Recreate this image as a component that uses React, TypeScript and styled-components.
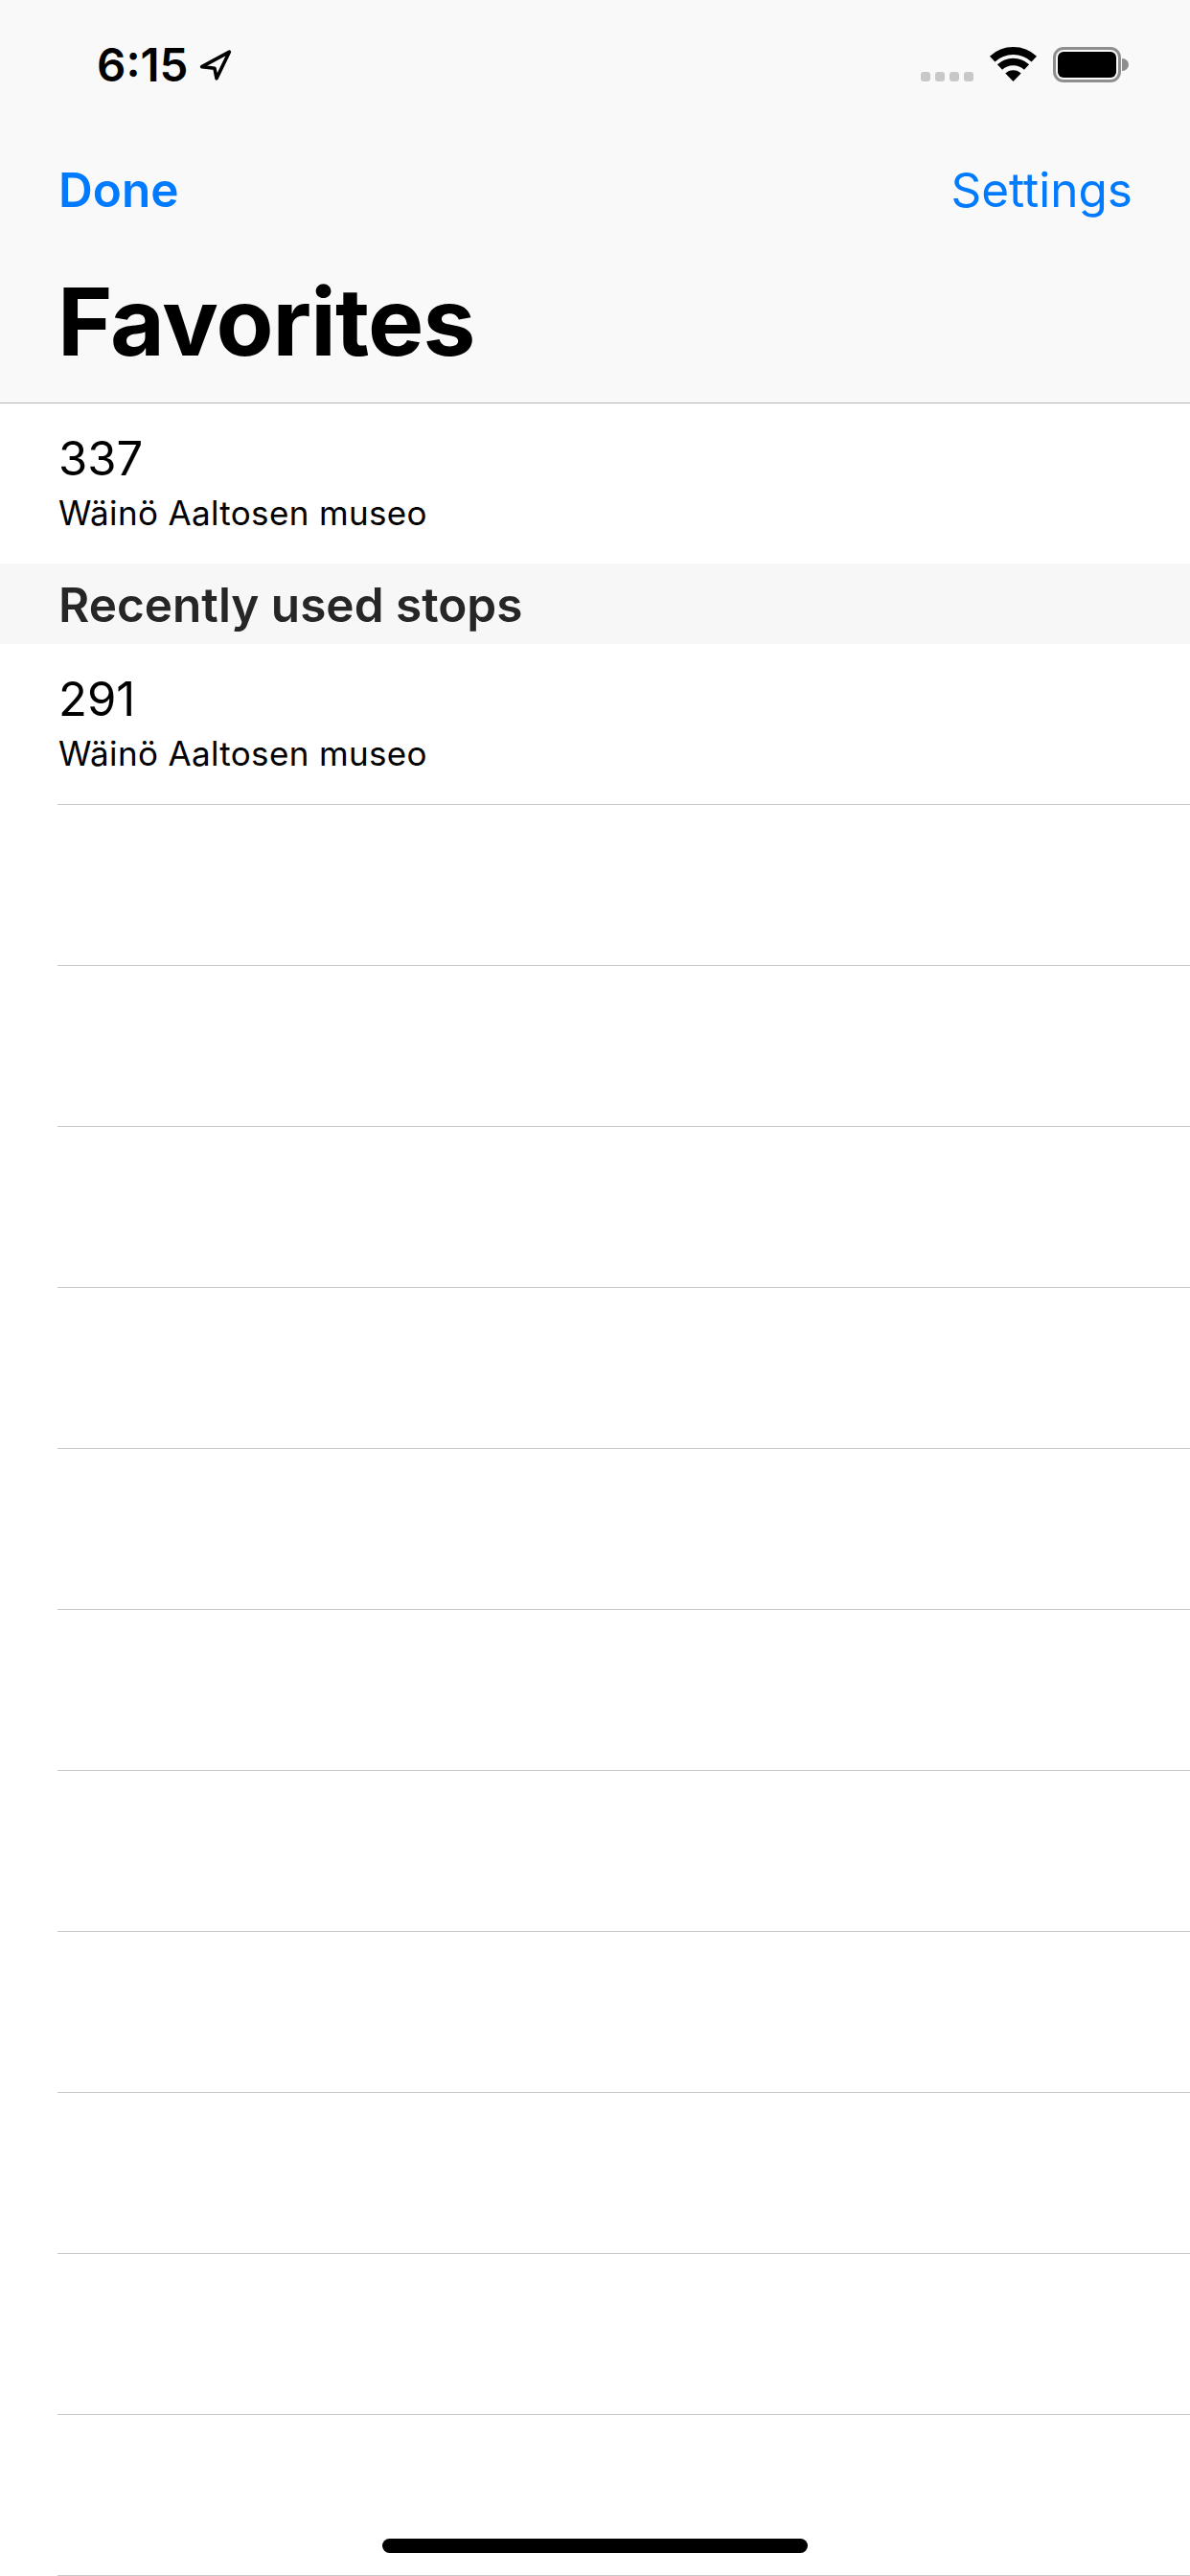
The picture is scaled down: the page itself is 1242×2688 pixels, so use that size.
import React from 'react';
import styled, { createGlobalStyle } from 'styled-components';

const GlobalStyle = createGlobalStyle`
  html, body {
    margin: 0;
    padding: 0;
    background: #fff;
  }
  body {
    font-family: Inter, "Noto Sans", "Liberation Sans", sans-serif;
    overflow: hidden;
  }
`;

const emptyRows = Array.from({ length: 11 }, (_, i) => i);

const App = () => {
  return (
    <Screen>
      <GlobalStyle />
      <Header>
        <StatusBar>
          <TimeGroup>
            <Time>6:15</Time>
            <svg width="34" height="32" viewBox="0 0 32 30" fill="none">
              <path
                d="M29.5 2 L2.5 16.5 L15 18 L17 28 Z"
                stroke="#000"
                strokeWidth="3.4"
                strokeLinejoin="round"
              />
            </svg>
          </TimeGroup>
          <StatusIcons>
            <SignalDots>
              <SignalDot />
              <SignalDot />
              <SignalDot />
              <SignalDot />
            </SignalDots>
            <svg width="49" height="36" viewBox="0 0 49 36" fill="none">
              <path d="M2.7 12.6 A32 32 0 0 1 46.3 12.6" stroke="#000" strokeWidth="8" />
              <path d="M10.5 21 A20.5 20.5 0 0 1 38.5 21" stroke="#000" strokeWidth="7.5" />
              <path d="M24.5 36 L16.3 27.6 A11.6 11.6 0 0 1 32.7 27.6 Z" fill="#000" />
            </svg>
            <Battery>
              <BatteryBody>
                <BatteryFill />
              </BatteryBody>
              <BatteryNub />
            </Battery>
          </StatusIcons>
        </StatusBar>
        <NavBar>
          <NavButton $bold>Done</NavButton>
          <NavButton>Settings</NavButton>
        </NavBar>
        <Title>Favorites</Title>
      </Header>

      <StopRow $plain>
        <StopBody $plain>
          <StopNumber>337</StopNumber>
          <StopName>Wäinö Aaltosen museo</StopName>
        </StopBody>
      </StopRow>

      <SectionHeader>Recently used stops</SectionHeader>

      <StopRow>
        <StopBody>
          <StopNumber>291</StopNumber>
          <StopName>Wäinö Aaltosen museo</StopName>
        </StopBody>
      </StopRow>

      {emptyRows.map((row) => (
        <StopRow key={row}>
          <StopBody />
        </StopRow>
      ))}

      <HomeIndicator />
    </Screen>
  );
};

export default App;

const Screen = styled.div`
  position: relative;
  width: 1242px;
  height: 2688px;
  overflow: hidden;
  background: #fff;
`;

const Header = styled.header`
  height: 420px;
  background: #f9f9f9;
  border-bottom: 1px solid #b3b3b3;
  box-sizing: content-box;
`;

const StatusBar = styled.div`
  height: 166px;
  display: flex;
  justify-content: space-between;
  align-items: flex-start;
  padding: 45px 64px 0 101px;
  box-sizing: border-box;
`;

const TimeGroup = styled.div`
  display: flex;
  align-items: center;
  gap: 11px;
`;

const Time = styled.span`
  font-size: 47.5px;
  font-weight: 600;
  line-height: 46px;
  color: #000;
`;

const StatusIcons = styled.div`
  display: flex;
  align-items: flex-start;
  padding-top: 4px;
`;

const SignalDots = styled.div`
  display: flex;
  gap: 5px;
  margin: 26px 17px 0 0;
`;

const SignalDot = styled.span`
  width: 10px;
  height: 10px;
  border-radius: 3px;
  background: #c8c8c8;
`;

const Battery = styled.div`
  display: flex;
  align-items: center;
  margin-left: 17px;
`;

const BatteryBody = styled.div`
  width: 71px;
  height: 37px;
  box-sizing: border-box;
  border: 3px solid #8e8e8e;
  border-radius: 11px;
  padding: 2px;
`;

const BatteryFill = styled.div`
  width: 100%;
  height: 100%;
  border-radius: 6px;
  background: #000;
`;

const BatteryNub = styled.div`
  width: 7px;
  height: 13px;
  margin-left: 1px;
  border-radius: 0 7px 7px 0;
  background: #8e8e8e;
`;

const NavBar = styled.nav`
  display: flex;
  justify-content: space-between;
  align-items: center;
  height: 64px;
  padding: 0 60px 0 61px;
`;

const NavButton = styled.span<{ $bold?: boolean }>`
  font-size: 49.5px;
  font-weight: ${(p) => (p.$bold ? 600 : 400)};
  line-height: 64px;
  color: #007aff;
`;

const Title = styled.h1`
  margin: 0;
  padding: 51px 0 0 60px;
  font-size: 98px;
  font-weight: 700;
  letter-spacing: -0.9px;
  line-height: 110px;
  color: #000;
`;

const StopRow = styled.div<{ $plain?: boolean }>`
  height: ${(p) => (p.$plain ? 167 : 168)}px;
  padding-left: 60px;
  box-sizing: border-box;
`;

const StopBody = styled.div<{ $plain?: boolean }>`
  height: 100%;
  box-sizing: border-box;
  padding-left: 1px;
  border-bottom: ${(p) => (p.$plain ? 'none' : '1px solid #c8c8c8')};
`;

const StopNumber = styled.div`
  padding-top: 26px;
  font-size: 49px;
  line-height: 64px;
  color: #000;
`;

const StopName = styled.div`
  padding-top: 2px;
  font-size: 35px;
  line-height: 44px;
  letter-spacing: 0.35px;
  color: #000;
`;

const SectionHeader = styled.div`
  height: 84px;
  padding-left: 61px;
  background: #f7f7f7;
  font-size: 49.5px;
  font-weight: 600;
  line-height: 86px;
  color: #262626;
`;

const HomeIndicator = styled.div`
  position: absolute;
  left: 399px;
  bottom: 24px;
  width: 444px;
  height: 15px;
  border-radius: 8px;
  background: #000;
`;
